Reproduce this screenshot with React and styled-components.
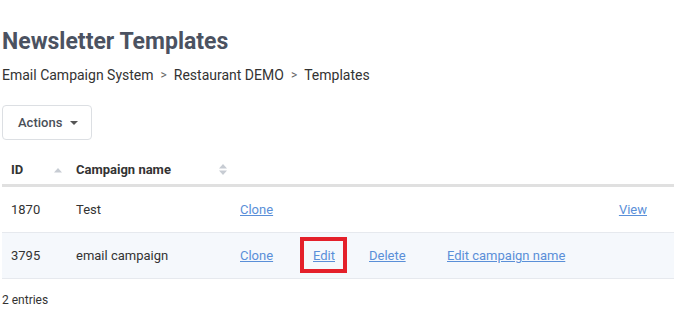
import React from "react";
import styled, { createGlobalStyle } from "styled-components";

const Global = createGlobalStyle`
  body { margin: 0; background: #fff; font-family: Roboto, "Noto Sans", Arial, sans-serif; color: #333; }
`;

const Page = styled.div`
  padding: 28px 8px 0 2px;
  width: 674px;
  box-sizing: border-box;
`;

const Title = styled.h1`
  margin: 0;
  font-size: 23px;
  line-height: 28px;
  font-weight: 700;
  color: #4b5261;
`;

const Crumbs = styled.nav`
  display: flex;
  align-items: center;
  gap: 7px;
  margin-top: 9px;
  font-size: 14px;
  line-height: 20px;
  color: #333;
`;

const Sep = styled.span`
  color: #666;
  font-size: 12px;
`;

const ActionsButton = styled.button`
  margin-top: 20px;
  display: flex;
  align-items: center;
  gap: 8px;
  height: 35px;
  width: 90px;
  padding: 0 0 0 15px;
  background: #fff;
  border: 1px solid #dcdfe3;
  border-radius: 4px;
  font-family: inherit;
  font-size: 13px;
  font-weight: 500;
  color: #4a4f58;
`;

const Caret = styled.span`
  width: 0;
  height: 0;
  border-left: 4px solid transparent;
  border-right: 4px solid transparent;
  border-top: 4px solid #555;
`;

const Table = styled.div`
  margin-top: 15px;
  width: 672px;
`;

const Row = styled.div`
  display: grid;
  grid-template-columns: 64px 164px 73px 56px 78px 1fr auto;
  align-items: center;
  height: ${(p) => (p.$head ? "29px" : "45px")};
  background: ${(p) => (p.$alt ? "#f5f8fc" : "#fff")};
  border-bottom: ${(p) => (p.$head ? "3px solid #e0e0e0" : "1px solid #e6e9ee")};
  font-size: 13px;
`;

const Cell = styled.div`
  padding-left: ${(p) => (p.$first ? "9px" : "10px")};
  padding-right: ${(p) => (p.$right ? "27px" : "0")};
  display: flex;
  align-items: center;
  justify-content: space-between;
  font-weight: ${(p) => (p.$head ? 700 : 400)};
  color: #333;
`;

const Link = styled.a`
  color: #5a8fd8;
  text-decoration: underline;
  cursor: pointer;
  position: relative;
`;

const Highlight = styled.span`
  position: absolute;
  left: -13px;
  top: -11px;
  right: -12px;
  bottom: -10px;
  border: 4px solid #e4202a;
  pointer-events: none;
`;

const Footer = styled.div`
  margin-top: 13px;
  font-size: 12px;
  line-height: 16px;
  color: #333;
`;

const SortUp = () => (
  <svg width="10" height="6" viewBox="0 0 10 6" style={{ marginRight: 3 }}>
    <path d="M1 5.5 L5 1 L9 5.5 Z" fill="#c7ccd3" />
  </svg>
);

const SortBoth = () => (
  <svg width="10" height="13" viewBox="0 0 10 13" style={{ marginRight: 2 }}>
    <path d="M1 5.5 L5 1 L9 5.5 Z" fill="#c7ccd3" />
    <path d="M1 7.5 L5 12 L9 7.5 Z" fill="#c7ccd3" />
  </svg>
);

export default function App() {
  return (
    <>
      <Global />
      <Page>
        <Title>Newsletter Templates</Title>
        <Crumbs>
          <span>Email Campaign System</span>
          <Sep>&gt;</Sep>
          <span>Restaurant DEMO</span>
          <Sep>&gt;</Sep>
          <span>Templates</span>
        </Crumbs>
        <ActionsButton>
          Actions <Caret />
        </ActionsButton>
        <Table>
          <Row $head>
            <Cell $first $head>ID <SortUp /></Cell>
            <Cell $head>Campaign name <SortBoth /></Cell>
            <Cell />
            <Cell />
            <Cell />
            <Cell />
            <Cell />
          </Row>
          <Row>
            <Cell $first>1870</Cell>
            <Cell>Test</Cell>
            <Cell><Link>Clone</Link></Cell>
            <Cell />
            <Cell />
            <Cell />
            <Cell $right><Link>View</Link></Cell>
          </Row>
          <Row $alt>
            <Cell $first>3795</Cell>
            <Cell>email campaign</Cell>
            <Cell><Link>Clone</Link></Cell>
            <Cell><Link>Edit<Highlight /></Link></Cell>
            <Cell><Link>Delete</Link></Cell>
            <Cell><Link>Edit campaign name</Link></Cell>
            <Cell $right />
          </Row>
        </Table>
        <Footer>2 entries</Footer>
      </Page>
    </>
  );
}
